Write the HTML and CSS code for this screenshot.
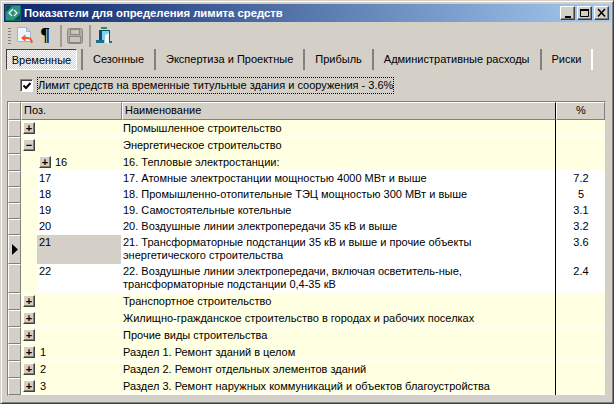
FILE: index.html
```html
<!DOCTYPE html>
<html lang="ru">
<head>
<meta charset="utf-8">
<title>Показатели для определения лимита средств</title>
<link rel="stylesheet" href="styles.css">
</head>
<body>
<div class="window">
  <div class="titlebar">
    <svg class="appicon" width="16" height="16" viewBox="0 0 16 16"><rect width="16" height="16" fill="#0f6f62"/><rect x="1" y="1" width="14" height="14" fill="#2f8f80"/><path d="M1 1h6L1 7zM15 15H9l6-6z" fill="#0b4f48"/><path d="M8 4 4 8l3 3M9 5l3 3-3 3" fill="none" stroke="#e8fff8" stroke-width="1.2"/></svg>
    <span class="title">Показатели для определения лимита средств</span>
    <div class="capbtns">
      <div class="capbtn"><svg width="13" height="12"><rect x="4" y="9" width="6" height="2" fill="#000"/></svg></div>
      <div class="capbtn"><svg width="13" height="12"><path d="M2.500 2.500h8v7h-8z" fill="none" stroke="#000"/><rect x="2" y="2" width="9" height="2" fill="#000"/></svg></div>
      <div class="capbtn"><svg width="13" height="12"><path d="M3 2 10 9.500M10 2 3 9.500" fill="none" stroke="#000" stroke-width="1.600"/></svg></div>
    </div>
  </div>
  <div class="toolbar">
    <div class="grip"></div>
    <svg class="tool" width="16" height="17" viewBox="0 0 16 17"><path d="M.5.5h9l4 4v10H.5z" fill="#eef3fc" stroke="#9db3dc"/><path d="M9.500.5v4h4z" fill="#c9d8f2" stroke="#9db3dc"/><path d="M14.500 16c.6-3.500-1.500-5-4-5H8" fill="none" stroke="#ef5a24" stroke-width="2"/><path d="M8.500 7.500 4 11l4.500 3.500z" fill="#ef5a24"/></svg>
    <span class="pilcrow">¶</span>
    <div class="tsep"></div>
    <svg class="tool disk" width="16" height="16" viewBox="0 0 16 16"><rect x=".5" y=".5" width="15" height="15" rx="2" fill="#b0aca4" stroke="#8c887f"/><rect x="3.500" y="1.500" width="9" height="5" fill="#c8c4bc" stroke="#8c887f"/><rect x="2.500" y="8.500" width="11" height="6" fill="#c8c4bc" stroke="#8c887f"/></svg>
    <div class="tsep"></div>
    <svg class="tool" width="16" height="17" viewBox="0 0 16 17"><rect x="5" y="0" width="6" height="2" fill="#1a9a50"/><rect x="3" y="3" width="11" height="11" fill="#17496e"/><rect x="6" y="4" width="7" height="10" fill="#7fd2ee"/><path d="M9 8l4-2v11l-4-2z" fill="#f4f4f4"/><rect x="0" y="13" width="8" height="3" fill="#1c6d96"/><rect x="13" y="14" width="3" height="2" fill="#1c6d96"/></svg>
  </div>
  <div class="tabs">
    <div class="tab active">Временные</div>
    <div class="tab">Сезонные</div>
    <div class="tab">Экспертиза и Проектные</div>
    <div class="tab">Прибыль</div>
    <div class="tab">Административные расходы</div>
    <div class="tab">Риски</div>
  </div>
  <div class="checkline">
    <div class="checkbox"><svg width="10" height="10" viewBox="0 0 10 10"><path d="M1.500 4.500 4 7l4.500-5" fill="none" stroke="#000" stroke-width="2"/></svg></div>
    <span class="checklabel">Лимит средств на временные титульные здания и сооружения - 3.6%</span>
  </div>
  <div class="grid">
    <div class="row head">
      <div class="rh"></div><div class="hc">Поз.</div><div class="hc">Наименование</div><div class="hc center">%</div>
    </div>
    <div class="row yellow">
      <div class="rh"></div><div class="pos"><span class="exp">+</span></div><div class="name">Промышленное строительство</div><div class="pct"></div>
    </div>
    <div class="row yellow">
      <div class="rh"></div><div class="pos"><span class="exp">−</span></div><div class="name">Энергетическое строительство</div><div class="pct"></div>
    </div>
    <div class="row yellow">
      <div class="rh"></div><div class="pos nested"><span class="exp">+</span><span>16</span></div><div class="name">16. Тепловые электростанции:</div><div class="pct"></div>
    </div>
    <div class="row leaf">
      <div class="rh"></div><div class="pos"><span class="code">17</span></div><div class="name">17. Атомные электростанции мощностью 4000 МВт и выше</div><div class="pct">7.2</div>
    </div>
    <div class="row leaf">
      <div class="rh"></div><div class="pos"><span class="code">18</span></div><div class="name">18. Промышленно-отопительные ТЭЦ мощностью 300 МВт и выше</div><div class="pct">5</div>
    </div>
    <div class="row leaf">
      <div class="rh"></div><div class="pos"><span class="code">19</span></div><div class="name">19. Самостоятельные котельные</div><div class="pct">3.1</div>
    </div>
    <div class="row leaf">
      <div class="rh"></div><div class="pos"><span class="code">20</span></div><div class="name">20. Воздушные линии электропередачи 35 кВ и выше</div><div class="pct">3.2</div>
    </div>
    <div class="row leaf tall">
      <div class="rh"><svg width="6" height="11"><path d="M0 0 6 5.500 0 11z" fill="#000"/></svg></div><div class="pos"><span class="code selected">21</span></div><div class="name">21. Трансформаторные подстанции 35 кВ и выше и прочие объекты<br>энергетического строительства</div><div class="pct">3.6</div>
    </div>
    <div class="row leaf tall">
      <div class="rh"></div><div class="pos"><span class="code">22</span></div><div class="name">22. Воздушные линии электропередачи, включая осветитель-ные,<br>трансформаторные подстанции 0,4-35 кВ</div><div class="pct">2.4</div>
    </div>
    <div class="row yellow">
      <div class="rh"></div><div class="pos"><span class="exp">+</span></div><div class="name">Транспортное строительство</div><div class="pct"></div>
    </div>
    <div class="row yellow">
      <div class="rh"></div><div class="pos"><span class="exp">+</span></div><div class="name">Жилищно-гражданское строительство в городах и рабочих поселках</div><div class="pct"></div>
    </div>
    <div class="row yellow">
      <div class="rh"></div><div class="pos"><span class="exp">+</span></div><div class="name">Прочие виды строительства</div><div class="pct"></div>
    </div>
    <div class="row yellow">
      <div class="rh"></div><div class="pos"><span class="exp">+</span><span>1</span></div><div class="name">Раздел 1. Ремонт зданий в целом</div><div class="pct"></div>
    </div>
    <div class="row yellow">
      <div class="rh"></div><div class="pos"><span class="exp">+</span><span>2</span></div><div class="name">Раздел 2. Ремонт отдельных элементов зданий</div><div class="pct"></div>
    </div>
    <div class="row yellow">
      <div class="rh"></div><div class="pos"><span class="exp">+</span><span>3</span></div><div class="name">Раздел 3. Ремонт наружных коммуникаций и объектов благоустройства</div><div class="pct"></div>
    </div>
  </div>
</div>
</body>
</html>
```
FILE: styles.css
```css
* { box-sizing: border-box; }
html, body { margin: 0; padding: 0; }
body { width: 614px; height: 404px; overflow: hidden; font-family: "Liberation Sans", Arial, sans-serif; font-size: 11px; color: #000; background: #d4d0c8; }
.window {
  width: 614px; height: 404px; padding: 3px;
  border: 1px solid; border-color: #d4d0c8 #404040 #404040 #d4d0c8;
  box-shadow: inset 1px 1px 0 #fff, inset -1px -1px 0 #808080;
  background: #d4d0c8;
}
.titlebar {
  height: 18px; margin-right: -1px; display: flex; align-items: center; padding: 0 2px 0 1px;
  background: linear-gradient(90deg, #0a246a, #a6caf0);
}
.appicon { flex: none; }
.title { margin-left: 3px; color: #fff; font-weight: bold; font-size: 11.300px; white-space: nowrap; }
.capbtns { margin-left: auto; display: flex; gap: 2px; }
.capbtn {
  width: 15px; height: 14px; background: #d4d0c8;
  border: 1px solid; border-color: #fff #404040 #404040 #fff;
  box-shadow: inset -1px -1px 0 #808080;
}
.capbtn svg { display: block; }
.toolbar { height: 25px; display: flex; align-items: center; padding: 2px 0 0 4px; }
.grip { width: 3px; height: 16px; margin-right: 6px; background: repeating-linear-gradient(180deg, #808080 0 1px, #d4d0c8 1px 3px); }
.tool { flex: none; }
.tool.disk { margin-right: 1px; }
.pilcrow { width: 12px; margin: 0 9px 0 6px; font: bold 18px/17px "Liberation Serif", serif; text-align: center; }
.tsep { width: 2px; height: 22px; margin: 0 5px; background: #a09c94; }
.pilcrow + .tsep { margin-left: 0; }
.tabs { height: 21px; margin-top: 2px; display: flex; padding-left: 2px; font-size: 11px; }
.tab { height: 21px; line-height: 21px; padding: 0 10px; white-space: nowrap; border-left: 2px solid; border-image: linear-gradient(90deg, #808080 50%, #fff 50%) 1; }
.tab:last-child { border-right: 2px solid; }
.tab.active {
  width: 71px; padding: 0; margin-right: 4px; text-align: center; border: 1px solid;
  border-color: #404040 #fff #fff #404040; border-image: none;
  background: repeating-conic-gradient(#fff 0 25%, #d4d0c8 0 50%) 0 0 / 2px 2px;
  line-height: 20px;
}
.checkline { height: 31px; display: flex; align-items: center; padding-left: 16px; font-size: 11px; }
.checkbox {
  width: 13px; height: 13px; background: #fff; border: 1px solid; border-color: #808080 #fff #fff #808080;
  box-shadow: inset 1px 1px 0 #404040; display: flex; align-items: center; justify-content: center;
}
.checklabel { margin-left: 4px; height: 17px; line-height: 15px; border: 1px dotted #000; white-space: nowrap; }
.grid {
  width: 599px; margin-left: 3px; border: 1px solid; border-color: #808080 #d4d0c8 #d4d0c8 #808080;
  background: #d4d0c8; height: 295px;
}
.row { display: grid; grid-template-columns: 13px 101px 434px 49px; height: 17px; line-height: 13px; font-size: 11px; white-space: nowrap; }
.head { height: 18px; }
.head > div { background: #d4d0c8; border: 1px solid; border-color: #fff #808080 #808080 #fff; padding-left: 2px; line-height: 15px; }
.head > .hc:nth-child(3) { border-right-color: #000; }
.hc.center { text-align: center; padding: 0 0 0 1px; }
.rh {
  background: #d4d0c8; border: 1px solid; border-color: #fff #808080 #808080 #fff;
  display: flex; align-items: center; justify-content: center;
}
.yellow, .leaf { background: #ffffe1; }
.yellow { box-shadow: inset 0 -1px 0 #fff; }
.leaf { height: 16px; }
.tall { height: 29px; }
.pos { display: flex; align-items: flex-start; gap: 5px; padding-left: 2px; padding-top: 2px; }
.nested { padding-left: 18px; gap: 4px; }
.leaf .pos { padding-top: 0; }
.code { flex: 1; align-self: stretch; background: #fff; margin: 0 0 0 14px; padding-left: 2px; padding-top: 1px; }
.code.selected { background: #d4d0c8; margin-right: 1px; }
.leaf .name, .leaf .pct { background: #fff; }
.name { padding-left: 1px; padding-top: 2px; border-right: 1px solid #000; }
.pct { text-align: center; padding-top: 2px; padding-left: 1px; }
.leaf .name, .leaf .pct { padding-top: 1px; }
.exp {
  flex: none; width: 12px; height: 12px; background: #d4d0c8; font: bold 11px/10px "Liberation Sans", sans-serif; text-align: center;
  border: 1px solid; border-color: #fff #404040 #404040 #fff; box-shadow: inset -1px -1px 0 #808080;
}
```
